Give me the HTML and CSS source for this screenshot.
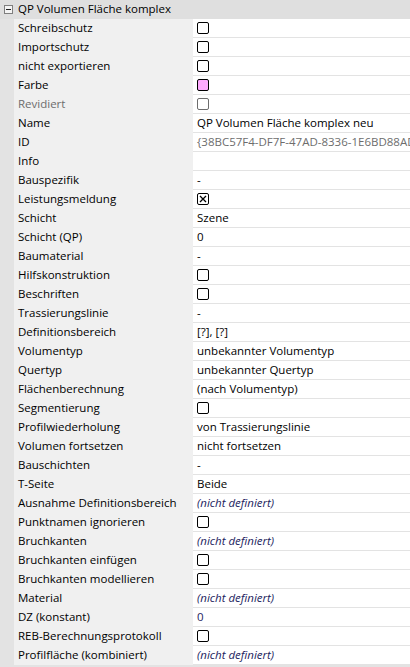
FILE: index.html
```html
<!DOCTYPE html>
<html lang="de">
<head>
<meta charset="utf-8">
<title>Eigenschaften</title>
<link rel="stylesheet" href="styles.css">
</head>
<body>
<div class="grid">
  <div class="header">
    <span class="toggle"><span class="minus"></span></span>
    <span class="htext">QP Volumen Fläche komplex</span>
  </div>
  <div class="rows">
    <div class="row"><div class="lbl">Schreibschutz</div><div class="val"><span class="cb"></span></div></div>
    <div class="row"><div class="lbl">Importschutz</div><div class="val"><span class="cb"></span></div></div>
    <div class="row"><div class="lbl">nicht exportieren</div><div class="val"><span class="cb"></span></div></div>
    <div class="row"><div class="lbl">Farbe</div><div class="val"><span class="cb color"></span></div></div>
    <div class="row"><div class="lbl dis">Revidiert</div><div class="val"><span class="cb dis"></span></div></div>
    <div class="row"><div class="lbl">Name</div><div class="val">QP Volumen Fläche komplex neu</div></div>
    <div class="row"><div class="lbl">ID</div><div class="val dis">{38BC57F4-DF7F-47AD-8336-1E6BD88AD6F2}</div></div>
    <div class="row"><div class="lbl">Info</div><div class="val"></div></div>
    <div class="row"><div class="lbl">Bauspezifik</div><div class="val">-</div></div>
    <div class="row"><div class="lbl">Leistungsmeldung</div><div class="val"><span class="cb checked"><svg viewBox="0 0 12 12" width="12" height="12"><path d="M3 3 L9 9 M9 3 L3 9" stroke="#000" stroke-width="1.3" fill="none"/></svg></span></div></div>
    <div class="row"><div class="lbl">Schicht</div><div class="val">Szene</div></div>
    <div class="row"><div class="lbl">Schicht (QP)</div><div class="val">0</div></div>
    <div class="row"><div class="lbl">Baumaterial</div><div class="val">-</div></div>
    <div class="row"><div class="lbl">Hilfskonstruktion</div><div class="val"><span class="cb"></span></div></div>
    <div class="row"><div class="lbl">Beschriften</div><div class="val"><span class="cb"></span></div></div>
    <div class="row"><div class="lbl">Trassierungslinie</div><div class="val">-</div></div>
    <div class="row"><div class="lbl">Definitionsbereich</div><div class="val">[?], [?]</div></div>
    <div class="row"><div class="lbl">Volumentyp</div><div class="val">unbekannter Volumentyp</div></div>
    <div class="row"><div class="lbl">Quertyp</div><div class="val">unbekannter Quertyp</div></div>
    <div class="row"><div class="lbl">Flächenberechnung</div><div class="val">(nach Volumentyp)</div></div>
    <div class="row"><div class="lbl">Segmentierung</div><div class="val"><span class="cb"></span></div></div>
    <div class="row"><div class="lbl">Profilwiederholung</div><div class="val">von Trassierungslinie</div></div>
    <div class="row"><div class="lbl">Volumen fortsetzen</div><div class="val">nicht fortsetzen</div></div>
    <div class="row"><div class="lbl">Bauschichten</div><div class="val">-</div></div>
    <div class="row"><div class="lbl">T-Seite</div><div class="val">Beide</div></div>
    <div class="row"><div class="lbl">Ausnahme Definitionsbereich</div><div class="val undef">(nicht definiert)</div></div>
    <div class="row"><div class="lbl">Punktnamen ignorieren</div><div class="val"><span class="cb"></span></div></div>
    <div class="row"><div class="lbl">Bruchkanten</div><div class="val undef">(nicht definiert)</div></div>
    <div class="row"><div class="lbl">Bruchkanten einfügen</div><div class="val"><span class="cb"></span></div></div>
    <div class="row"><div class="lbl">Bruchkanten modellieren</div><div class="val"><span class="cb"></span></div></div>
    <div class="row"><div class="lbl">Material</div><div class="val undef">(nicht definiert)</div></div>
    <div class="row"><div class="lbl">DZ (konstant)</div><div class="val num">0</div></div>
    <div class="row"><div class="lbl">REB-Berechnungsprotokoll</div><div class="val"><span class="cb"></span></div></div>
    <div class="row"><div class="lbl">Profilfläche (kombiniert)</div><div class="val undef">(nicht definiert)</div></div>
  </div>
</div>
</body>
</html>
```
FILE: styles.css
```css
html, body {
  margin: 0;
  padding: 0;
}
body {
  background: #e3e3e3;
  font-family: "Open Sans", "Noto Sans", sans-serif;
  font-size: 11.5px;
  color: #000;
  width: 410px;
  height: 667px;
  overflow: hidden;
}
.grid {
  width: 410px;
}
.header {
  height: 19px;
  background: #dfdfdf;
  display: flex;
  align-items: center;
  box-sizing: border-box;
  padding-bottom: 1px;
}
.toggle {
  width: 9px;
  height: 9px;
  box-sizing: border-box;
  border: 1px solid #7f7f7f;
  background: #f4f4f4;
  margin-left: 4px;
  margin-right: 5px;
  display: flex;
  align-items: center;
  justify-content: center;
}
.minus {
  width: 5px;
  height: 1px;
  background: #222;
}
.htext {
  white-space: nowrap;
  line-height: 14px;
  margin-top: -1px;
}
.rows {
  padding-left: 14px;
  background: #e3e3e3;
}
.row {
  display: flex;
  height: 19px;
}
.lbl {
  width: 179px;
  flex: none;
  background: #f0f0f0;
  padding-left: 4px;
  padding-bottom: 2px;
  box-sizing: border-box;
  display: flex;
  align-items: center;
  white-space: nowrap;
  overflow: hidden;
}
.lbl.dis {
  color: #6d6d6d;
}
.val {
  flex: 1;
  background: #fff;
  border-bottom: 1px solid #e3e3e3;
  padding-left: 4px;
  padding-bottom: 1px;
  display: flex;
  align-items: center;
  white-space: nowrap;
  overflow: hidden;
  min-width: 0;
}
.val.dis {
  color: #6d6d6d;
}
.val.undef {
  font-style: italic;
  color: #1d1d5e;
}
.val.num {
  color: #1d1d5e;
}
.cb {
  width: 12px;
  height: 12px;
  box-sizing: border-box;
  border: 1px solid #000;
  border-radius: 2px;
  background: #fff;
  display: block;
  position: relative;
}
.cb.dis {
  border-color: #6d6d6d;
}
.cb.color {
  background: #ffaaff;
}
.cb.checked svg {
  position: absolute;
  left: -1px;
  top: -1px;
}
```
